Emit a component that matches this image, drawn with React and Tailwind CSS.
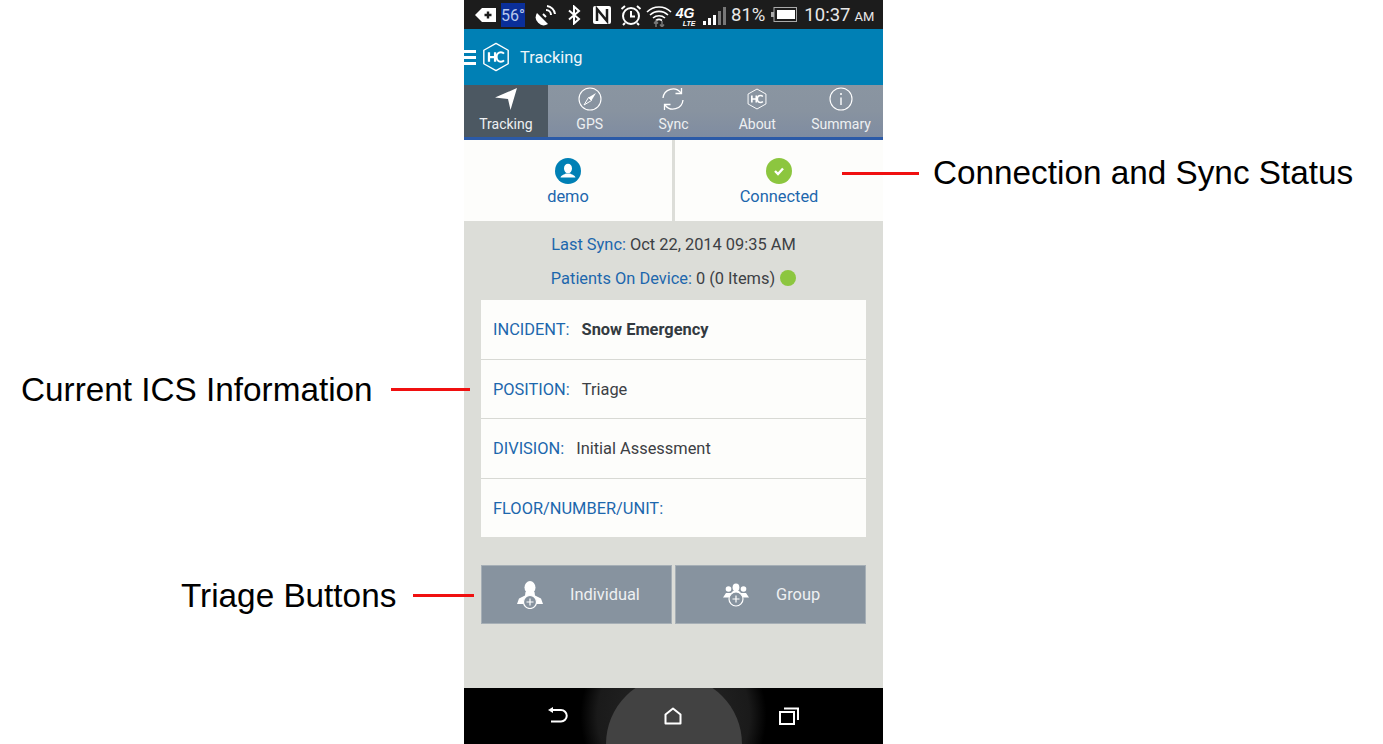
import React from "react";

const Hex = ({ size, stroke = 1.5 }) => (
  <svg width={size} height={size} viewBox="0 0 32 32" fill="none">
    <path d="M16 1.5 29 8.8V23.2L16 30.5 3 23.2V8.8Z" stroke="white" strokeWidth={stroke} strokeLinejoin="round" />
    <path d="M8.5 11V21M15 11V21M8.5 16H15" stroke="white" strokeWidth="2.4" />
    <path d="M24.5 12.4C23.6 11.4 22.4 11 21.2 11 18.4 11 16.6 13.2 16.6 16S18.4 21 21.2 21C22.4 21 23.6 20.6 24.5 19.6" stroke="white" strokeWidth="2.2" />
  </svg>
);

const Tab = ({ label, active, children }) => (
  <div className={`flex-1 flex flex-col items-center justify-end pb-[4px] h-full ${active ? "bg-[#4c5862]" : ""}`}>
    <div className="h-[28px] flex items-center justify-center mb-[3px]">{children}</div>
    <span className="text-[14px] leading-[18px] text-[#eef0f2]">{label}</span>
  </div>
);

const Row = ({ label, value, bold, last }) => (
  <div className={`flex-1 flex items-center px-3 pt-[3px] text-[16.4px] ${last ? "" : "border-b border-[#d8d9d4]"}`}>
    <span className="text-[#1c67ad]">{label}</span>
    {value && <span className={`ml-3 ${bold ? "font-bold text-[#333a40]" : "text-[#3c4044]"}`}>{value}</span>}
  </div>
);

const Callout = ({ className, children }) => (
  <div className={`flex items-center whitespace-nowrap font-['Liberation_Sans',Arial,sans-serif] text-[33.3px] leading-[40px] text-black ${className}`}>
    {children}
  </div>
);

const RedLine = ({ w, className = "" }) => <div className={`h-[3px] shrink-0 bg-[#f01010] ${w} ${className}`} />;

export default function App() {
  return (
    <div className="flex w-[1383px] h-[744px] overflow-hidden bg-white font-['Roboto',sans-serif]">
      <div className="w-[464px] shrink-0 flex flex-col z-10">
        <Callout className="mt-[368px] pl-[21px]">
          <span className="pt-[2px]">Current ICS Information</span>
          <RedLine w="w-[79px]" className="ml-[18px]" />
        </Callout>
        <Callout className="mt-[164px] pl-[181px]">
          <span className="pt-[2px]">Triage Buttons</span>
          <RedLine w="w-[61px]" className="ml-[17px]" />
        </Callout>
      </div>

      <div className="w-[419px] shrink-0 h-[744px] flex flex-col bg-[#dcddd8]">
        {/* status bar */}
        <div className="h-[29px] bg-[#1c1c1c] flex items-center text-white shrink-0">
          <svg width="22" height="16" viewBox="0 0 22 16" className="ml-[11px]">
            <path d="M0 8 7 1H21V15H7Z" fill="white" />
            <path d="M13 4.5V11.5M9.5 8H16.5" stroke="#1c1c1c" strokeWidth="2.4" />
          </svg>
          <div className="ml-[4px] w-[24px] h-[24px] bg-[#0a2f9a] text-[#b9c8ec] text-[16px] leading-[26px] text-center">56°</div>
          <svg width="22" height="22" viewBox="0 0 22 22" className="ml-[10px]" fill="none" stroke="white">
            <path d="M2 9a8 8 0 0 0 11 11Z" fill="white" stroke="none" />
            <path d="M8 10 11 13" strokeWidth="2" />
            <path d="M11 6a5 5 0 0 1 5 5M12 2a9 9 0 0 1 8 8" strokeWidth="2" />
          </svg>
          <svg width="14" height="20" viewBox="0 0 14 20" className="ml-[10px]" fill="none" stroke="white" strokeWidth="2">
            <path d="M2 5.5 12 14 7 18.5V1.5L12 6 2 14.5" />
          </svg>
          <svg width="18" height="18" viewBox="0 0 18 18" className="ml-[12px]">
            <rect width="18" height="18" rx="2" fill="white" />
            <path d="M4 15V3L14 15V3" fill="none" stroke="#1c1c1c" strokeWidth="2.5" />
          </svg>
          <svg width="22" height="22" viewBox="0 0 22 22" className="ml-[9px]" fill="none" stroke="white" strokeWidth="2">
            <circle cx="11" cy="12" r="8" />
            <path d="M11 7V12.5H15M1.5 5 5 2M20.5 5 17 2M5 19l-2 2M17 19l2 2" />
          </svg>
          <svg width="26" height="24" viewBox="0 0 26 24" className="ml-[4px]" fill="none" stroke="white" strokeWidth="1.6">
            <path d="M1 9a17 17 0 0 1 24 0M4 12a13 13 0 0 1 18 0M7 15a9 9 0 0 1 12 0M10 17.5a5 5 0 0 1 6 0" />
            <path d="M10 24V19M8 20.5 10 18 12 20.5M16 18V23M14 21.5 16 24 18 21.5" stroke="#777" strokeWidth="1.5" />
          </svg>
          <div className="ml-[3px] w-[24px] h-[22px] flex flex-col items-center italic font-bold font-['Liberation_Sans',sans-serif] leading-none">
            <span className="text-[14px] leading-[14px] mt-[2px] -ml-[4px]">4G</span>
            <span className="text-[7px] leading-[7px] ml-[4px]">LTE</span>
          </div>
          <svg width="23" height="18" viewBox="0 0 23 18" className="ml-[4px] mt-[2px]">
            <rect x="0" y="14" width="3" height="4" fill="white" />
            <rect x="5" y="11" width="3" height="7" fill="white" />
            <rect x="10" y="8" width="3" height="10" fill="white" />
            <rect x="15" y="4" width="3" height="14" fill="#777" />
            <rect x="20" y="0" width="3" height="18" fill="#777" />
          </svg>
          <span className="ml-[5px] mt-[2px] text-[18.5px] text-[#e8e8e8]">81%</span>
          <svg width="26" height="15" viewBox="0 0 26 15" className="ml-[6px]">
            <rect x="3" y="0.5" width="22.5" height="14" fill="none" stroke="#aaa" />
            <rect x="0" y="5" width="3" height="5" fill="#aaa" />
            <rect x="6" y="3" width="18" height="9" fill="white" />
          </svg>
          <span className="ml-[7px] mt-[2px] text-[18.5px] text-[#e8e8e8]">10:37</span>
          <span className="ml-[4px] text-[13px] text-[#e8e8e8] mt-[4px]">AM</span>
        </div>

        {/* app header */}
        <div className="h-[56px] bg-[#0080b5] flex items-center shrink-0">
          <div className="flex flex-col gap-[3px] w-[12px]">
            <div className="h-[3px] bg-white" />
            <div className="h-[3px] bg-white" />
            <div className="h-[3px] bg-white" />
          </div>
          <div className="ml-[5px]"><Hex size={30} /></div>
          <span className="ml-[9px] mt-[3px] text-[16.4px] text-[#eef6fa]">Tracking</span>
        </div>

        {/* tabs */}
        <div className="h-[55px] shrink-0 flex flex-col">
          <div className="h-[52px] flex bg-gradient-to-b from-[#8a95a1] via-[#8893a0] to-[#7f8ca1]">
            <Tab label="Tracking" active>
              <svg width="22" height="22" viewBox="0 0 22 22"><path d="M0 9.5 22 0 15.5 22 13 11Z" fill="white" /></svg>
            </Tab>
            <Tab label="GPS">
              <svg width="24" height="24" viewBox="0 0 24 24" fill="none" stroke="white">
                <circle cx="12" cy="12" r="11" strokeWidth="1.1" />
                <path d="M18 6 13.5 13.5 10.5 10.5Z" fill="white" stroke="none" />
                <path d="M6 18 10.5 10.5 13.5 13.5Z" strokeWidth="1" />
              </svg>
            </Tab>
            <Tab label="Sync">
              <svg width="24" height="24" viewBox="0 0 24 24" fill="none" stroke="white" strokeWidth="1.3">
                <path d="M2 11A10 10 0 0 1 20 6M22 13A10 10 0 0 1 4 18" />
                <path d="M14.5 6.5H20.5V1M9.5 17.5H3.5V23" />
              </svg>
            </Tab>
            <Tab label="About"><Hex size={22} stroke={1.4} /></Tab>
            <Tab label="Summary">
              <svg width="24" height="24" viewBox="0 0 24 24" fill="none" stroke="white">
                <circle cx="12" cy="12" r="11" strokeWidth="1.1" />
                <path d="M12 10.5V18" strokeWidth="1.4" />
                <circle cx="12" cy="7" r="1" fill="white" stroke="none" />
              </svg>
            </Tab>
          </div>
          <div className="h-[3px] bg-[#2b5aa8]" />
        </div>

        {/* user / connection */}
        <div className="h-[81px] shrink-0 flex bg-[#fdfdfb]">
          <div className="w-[208px] flex flex-col items-center pt-[18px]">
            <svg width="26" height="26" viewBox="0 0 26 26">
              <circle cx="13" cy="13" r="13" fill="#0080b5" />
              <ellipse cx="13" cy="10.5" rx="4" ry="4.8" fill="white" />
              <path d="M5.5 19.5C6 17 9.5 16.5 11 15.5H15C16.5 16.5 20 17 20.5 19.5Z" fill="white" />
            </svg>
            <span className="mt-[1px] text-[16.4px] leading-[24px] text-[#1c67ad]">demo</span>
          </div>
          <div className="w-[3px] bg-[#dcddd8]" />
          <div className="flex-1 flex flex-col items-center pt-[18px]">
            <svg width="26" height="26" viewBox="0 0 26 26">
              <circle cx="13" cy="13" r="13" fill="#8cc63f" />
              <path d="M9 13 12 16 17 10.5" fill="none" stroke="white" strokeWidth="2.4" />
            </svg>
            <span className="mt-[1px] text-[16.4px] leading-[24px] text-[#1c67ad]">Connected</span>
          </div>
        </div>

        {/* content */}
        <div className="flex-1 flex flex-col">
          <div className="mt-[12px] h-[24px] flex items-center justify-center text-[16.4px] leading-[24px]">
            <span className="text-[#1c67ad]">Last Sync:</span>
            <span className="ml-[4px] text-[#3c4044]">Oct 22, 2014 09:35 AM</span>
          </div>
          <div className="mt-[10px] h-[24px] flex items-center justify-center text-[16.4px] leading-[24px]">
            <span className="text-[#1c67ad]">Patients On Device:</span>
            <span className="ml-[4px] text-[#3c4044]">0 (0 Items)</span>
            <span className="ml-[5px] w-[16px] h-[16px] rounded-full bg-[#8cc63f] -mt-[2px]" />
          </div>
          <div className="mt-[9px] mx-[17px] h-[237px] bg-[#fdfdfb] flex flex-col">
            <Row label="INCIDENT:" value="Snow Emergency" bold />
            <Row label="POSITION:" value="Triage" />
            <Row label="DIVISION:" value="Initial Assessment" />
            <Row label="FLOOR/NUMBER/UNIT:" last />
          </div>
          <div className="mt-[28px] mx-[17px] h-[59px] flex gap-[3px]">
            <div className="flex-1 bg-[#87939f] border border-[#a6afb6] flex items-center">
              <svg width="26" height="28" viewBox="0 0 26 28" className="ml-[35px]">
                <ellipse cx="13" cy="6.5" rx="5.5" ry="6.5" fill="white" />
                <path d="M8.5 11H17.5L18 14.5 24 17.5 26 23H0L2 17.5 8 14.5Z" fill="white" />
                <circle cx="13" cy="21" r="6.5" fill="#87939f" stroke="white" strokeWidth="1.2" />
                <path d="M13 17.5V24.5M9.5 21H16.5" stroke="white" strokeWidth="1.2" />
              </svg>
              <span className="ml-[27px] mt-[2px] text-[16.4px] text-[#eef0f2]">Individual</span>
            </div>
            <div className="flex-1 bg-[#87939f] border border-[#a6afb6] flex items-center">
              <svg width="26" height="24" viewBox="0 0 26 24" className="ml-[47px]">
                <circle cx="5.5" cy="6" r="2.8" fill="white" />
                <circle cx="20.5" cy="6" r="2.8" fill="white" />
                <ellipse cx="13" cy="4.5" rx="3.4" ry="4" fill="white" />
                <path d="M0 14.5 3 10H8L10 8H16L18 10H23L26 14.5Z" fill="white" />
                <circle cx="13" cy="16" r="7" fill="#87939f" stroke="white" strokeWidth="1.2" />
                <path d="M13 12.5V19.5M9.5 16H16.5" stroke="white" strokeWidth="1.2" />
              </svg>
              <span className="ml-[27px] mt-[2px] text-[16.4px] text-[#eef0f2]">Group</span>
            </div>
          </div>
        </div>

        {/* nav bar */}
        <div className="h-[56px] shrink-0 flex items-center justify-center relative overflow-hidden bg-[radial-gradient(circle_at_50%_50%,#2a2a2a_0%,#1a1a1a_36%,#000000_44%)]">
          <div className="absolute left-[142px] -top-[12px] w-[136px] h-[136px] rounded-full bg-[#424242]" />
          <div className="relative flex items-center">
            <svg width="20" height="18" viewBox="0 0 20 18" fill="none" stroke="white" strokeWidth="2">
              <path d="M4 3H13A5.5 5.5 0 0 1 13 14.5H3" />
              <path d="M0 3 5 0V6Z" fill="white" stroke="none" />
            </svg>
            <svg width="18" height="18" viewBox="0 0 18 18" fill="none" stroke="white" strokeWidth="2" className="ml-[96px]">
              <path d="M1.5 7.5 9 1.5 16.5 7.5V16.5H1.5Z" strokeLinejoin="round" />
            </svg>
            <svg width="20" height="18" viewBox="0 0 20 18" fill="none" stroke="white" strokeWidth="2" className="ml-[97px]">
              <rect x="1" y="5" width="14" height="12" />
              <path d="M5 1.5H19V13" />
            </svg>
          </div>
        </div>
      </div>

      <div className="flex-1 flex flex-col">
        <Callout className="mt-[153px] -ml-[41px]">
          <RedLine w="w-[77px]" className="mr-[14px]" />
          Connection and Sync Status
        </Callout>
      </div>
    </div>
  );
}
